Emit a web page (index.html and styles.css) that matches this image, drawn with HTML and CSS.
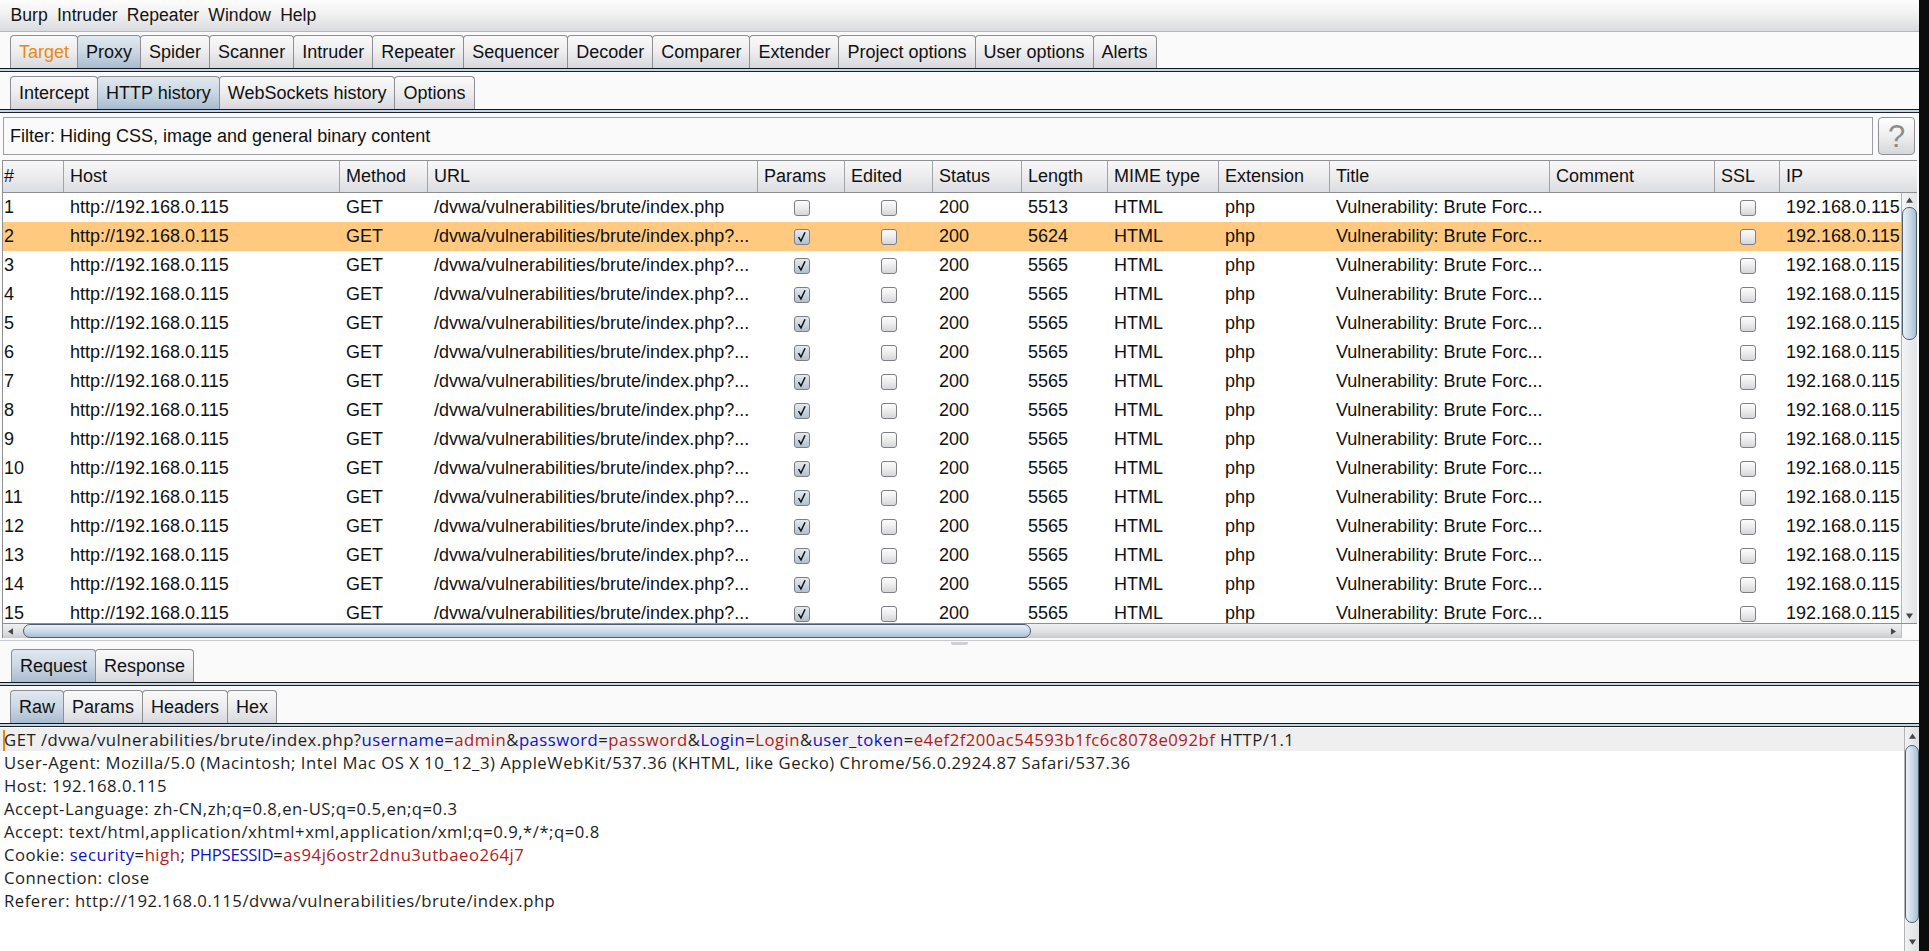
FILE: index.html
```html
<!DOCTYPE html>
<html>
<head>
<meta charset="utf-8">
<title>Burp Suite</title>
<link rel="stylesheet" href="styles.css">
</head>
<body>
<div class="app">
  <div class="menubar">
    <span>Burp</span><span>Intruder</span><span>Repeater</span><span>Window</span><span>Help</span>
  </div>

  <div class="tabstrip main">
    <div class="tab alert">Target</div>
    <div class="tab sel">Proxy</div>
    <div class="tab">Spider</div>
    <div class="tab">Scanner</div>
    <div class="tab">Intruder</div>
    <div class="tab">Repeater</div>
    <div class="tab">Sequencer</div>
    <div class="tab">Decoder</div>
    <div class="tab">Comparer</div>
    <div class="tab">Extender</div>
    <div class="tab">Project options</div>
    <div class="tab">User options</div>
    <div class="tab">Alerts</div>
  </div>
  <div class="tabline"></div>

  <div class="tabstrip sub">
    <div class="tab">Intercept</div>
    <div class="tab sel">HTTP history</div>
    <div class="tab">WebSockets history</div>
    <div class="tab">Options</div>
  </div>
  <div class="tabline"></div>

  <div class="filterrow">
    <div class="filter">Filter: Hiding CSS, image and general binary content</div>
    <div class="help">?</div>
  </div>

  <div class="table">
    <div class="thead">
      <div class="th num">#</div>
      <div class="th">Host</div>
      <div class="th">Method</div>
      <div class="th">URL</div>
      <div class="th">Params</div>
      <div class="th">Edited</div>
      <div class="th">Status</div>
      <div class="th">Length</div>
      <div class="th">MIME type</div>
      <div class="th">Extension</div>
      <div class="th">Title</div>
      <div class="th">Comment</div>
      <div class="th">SSL</div>
      <div class="th last">IP</div>
    </div>
    <div class="tbody">
      <div class="rows">
        <div class="row"><div class="td num">1</div><div class="td">http://192.168.0.115</div><div class="td">GET</div><div class="td">/dvwa/vulnerabilities/brute/index.php</div><div class="td cb"><i class="chk"></i></div><div class="td cb"><i class="chk"></i></div><div class="td">200</div><div class="td">5513</div><div class="td">HTML</div><div class="td">php</div><div class="td">Vulnerability: Brute Forc...</div><div class="td"></div><div class="td cb"><i class="chk"></i></div><div class="td">192.168.0.115</div></div>
        <div class="row sel"><div class="td num">2</div><div class="td">http://192.168.0.115</div><div class="td">GET</div><div class="td">/dvwa/vulnerabilities/brute/index.php?...</div><div class="td cb"><i class="chk on"><svg viewBox="0 0 15 15"><path d="M3.8 7.6 L6.4 11.8 L10.8 2.4"/></svg></i></div><div class="td cb"><i class="chk"></i></div><div class="td">200</div><div class="td">5624</div><div class="td">HTML</div><div class="td">php</div><div class="td">Vulnerability: Brute Forc...</div><div class="td"></div><div class="td cb"><i class="chk"></i></div><div class="td">192.168.0.115</div></div>
        <div class="row"><div class="td num">3</div><div class="td">http://192.168.0.115</div><div class="td">GET</div><div class="td">/dvwa/vulnerabilities/brute/index.php?...</div><div class="td cb"><i class="chk on"><svg viewBox="0 0 15 15"><path d="M3.8 7.6 L6.4 11.8 L10.8 2.4"/></svg></i></div><div class="td cb"><i class="chk"></i></div><div class="td">200</div><div class="td">5565</div><div class="td">HTML</div><div class="td">php</div><div class="td">Vulnerability: Brute Forc...</div><div class="td"></div><div class="td cb"><i class="chk"></i></div><div class="td">192.168.0.115</div></div>
        <div class="row"><div class="td num">4</div><div class="td">http://192.168.0.115</div><div class="td">GET</div><div class="td">/dvwa/vulnerabilities/brute/index.php?...</div><div class="td cb"><i class="chk on"><svg viewBox="0 0 15 15"><path d="M3.8 7.6 L6.4 11.8 L10.8 2.4"/></svg></i></div><div class="td cb"><i class="chk"></i></div><div class="td">200</div><div class="td">5565</div><div class="td">HTML</div><div class="td">php</div><div class="td">Vulnerability: Brute Forc...</div><div class="td"></div><div class="td cb"><i class="chk"></i></div><div class="td">192.168.0.115</div></div>
        <div class="row"><div class="td num">5</div><div class="td">http://192.168.0.115</div><div class="td">GET</div><div class="td">/dvwa/vulnerabilities/brute/index.php?...</div><div class="td cb"><i class="chk on"><svg viewBox="0 0 15 15"><path d="M3.8 7.6 L6.4 11.8 L10.8 2.4"/></svg></i></div><div class="td cb"><i class="chk"></i></div><div class="td">200</div><div class="td">5565</div><div class="td">HTML</div><div class="td">php</div><div class="td">Vulnerability: Brute Forc...</div><div class="td"></div><div class="td cb"><i class="chk"></i></div><div class="td">192.168.0.115</div></div>
        <div class="row"><div class="td num">6</div><div class="td">http://192.168.0.115</div><div class="td">GET</div><div class="td">/dvwa/vulnerabilities/brute/index.php?...</div><div class="td cb"><i class="chk on"><svg viewBox="0 0 15 15"><path d="M3.8 7.6 L6.4 11.8 L10.8 2.4"/></svg></i></div><div class="td cb"><i class="chk"></i></div><div class="td">200</div><div class="td">5565</div><div class="td">HTML</div><div class="td">php</div><div class="td">Vulnerability: Brute Forc...</div><div class="td"></div><div class="td cb"><i class="chk"></i></div><div class="td">192.168.0.115</div></div>
        <div class="row"><div class="td num">7</div><div class="td">http://192.168.0.115</div><div class="td">GET</div><div class="td">/dvwa/vulnerabilities/brute/index.php?...</div><div class="td cb"><i class="chk on"><svg viewBox="0 0 15 15"><path d="M3.8 7.6 L6.4 11.8 L10.8 2.4"/></svg></i></div><div class="td cb"><i class="chk"></i></div><div class="td">200</div><div class="td">5565</div><div class="td">HTML</div><div class="td">php</div><div class="td">Vulnerability: Brute Forc...</div><div class="td"></div><div class="td cb"><i class="chk"></i></div><div class="td">192.168.0.115</div></div>
        <div class="row"><div class="td num">8</div><div class="td">http://192.168.0.115</div><div class="td">GET</div><div class="td">/dvwa/vulnerabilities/brute/index.php?...</div><div class="td cb"><i class="chk on"><svg viewBox="0 0 15 15"><path d="M3.8 7.6 L6.4 11.8 L10.8 2.4"/></svg></i></div><div class="td cb"><i class="chk"></i></div><div class="td">200</div><div class="td">5565</div><div class="td">HTML</div><div class="td">php</div><div class="td">Vulnerability: Brute Forc...</div><div class="td"></div><div class="td cb"><i class="chk"></i></div><div class="td">192.168.0.115</div></div>
        <div class="row"><div class="td num">9</div><div class="td">http://192.168.0.115</div><div class="td">GET</div><div class="td">/dvwa/vulnerabilities/brute/index.php?...</div><div class="td cb"><i class="chk on"><svg viewBox="0 0 15 15"><path d="M3.8 7.6 L6.4 11.8 L10.8 2.4"/></svg></i></div><div class="td cb"><i class="chk"></i></div><div class="td">200</div><div class="td">5565</div><div class="td">HTML</div><div class="td">php</div><div class="td">Vulnerability: Brute Forc...</div><div class="td"></div><div class="td cb"><i class="chk"></i></div><div class="td">192.168.0.115</div></div>
        <div class="row"><div class="td num">10</div><div class="td">http://192.168.0.115</div><div class="td">GET</div><div class="td">/dvwa/vulnerabilities/brute/index.php?...</div><div class="td cb"><i class="chk on"><svg viewBox="0 0 15 15"><path d="M3.8 7.6 L6.4 11.8 L10.8 2.4"/></svg></i></div><div class="td cb"><i class="chk"></i></div><div class="td">200</div><div class="td">5565</div><div class="td">HTML</div><div class="td">php</div><div class="td">Vulnerability: Brute Forc...</div><div class="td"></div><div class="td cb"><i class="chk"></i></div><div class="td">192.168.0.115</div></div>
        <div class="row"><div class="td num">11</div><div class="td">http://192.168.0.115</div><div class="td">GET</div><div class="td">/dvwa/vulnerabilities/brute/index.php?...</div><div class="td cb"><i class="chk on"><svg viewBox="0 0 15 15"><path d="M3.8 7.6 L6.4 11.8 L10.8 2.4"/></svg></i></div><div class="td cb"><i class="chk"></i></div><div class="td">200</div><div class="td">5565</div><div class="td">HTML</div><div class="td">php</div><div class="td">Vulnerability: Brute Forc...</div><div class="td"></div><div class="td cb"><i class="chk"></i></div><div class="td">192.168.0.115</div></div>
        <div class="row"><div class="td num">12</div><div class="td">http://192.168.0.115</div><div class="td">GET</div><div class="td">/dvwa/vulnerabilities/brute/index.php?...</div><div class="td cb"><i class="chk on"><svg viewBox="0 0 15 15"><path d="M3.8 7.6 L6.4 11.8 L10.8 2.4"/></svg></i></div><div class="td cb"><i class="chk"></i></div><div class="td">200</div><div class="td">5565</div><div class="td">HTML</div><div class="td">php</div><div class="td">Vulnerability: Brute Forc...</div><div class="td"></div><div class="td cb"><i class="chk"></i></div><div class="td">192.168.0.115</div></div>
        <div class="row"><div class="td num">13</div><div class="td">http://192.168.0.115</div><div class="td">GET</div><div class="td">/dvwa/vulnerabilities/brute/index.php?...</div><div class="td cb"><i class="chk on"><svg viewBox="0 0 15 15"><path d="M3.8 7.6 L6.4 11.8 L10.8 2.4"/></svg></i></div><div class="td cb"><i class="chk"></i></div><div class="td">200</div><div class="td">5565</div><div class="td">HTML</div><div class="td">php</div><div class="td">Vulnerability: Brute Forc...</div><div class="td"></div><div class="td cb"><i class="chk"></i></div><div class="td">192.168.0.115</div></div>
        <div class="row"><div class="td num">14</div><div class="td">http://192.168.0.115</div><div class="td">GET</div><div class="td">/dvwa/vulnerabilities/brute/index.php?...</div><div class="td cb"><i class="chk on"><svg viewBox="0 0 15 15"><path d="M3.8 7.6 L6.4 11.8 L10.8 2.4"/></svg></i></div><div class="td cb"><i class="chk"></i></div><div class="td">200</div><div class="td">5565</div><div class="td">HTML</div><div class="td">php</div><div class="td">Vulnerability: Brute Forc...</div><div class="td"></div><div class="td cb"><i class="chk"></i></div><div class="td">192.168.0.115</div></div>
        <div class="row"><div class="td num">15</div><div class="td">http://192.168.0.115</div><div class="td">GET</div><div class="td">/dvwa/vulnerabilities/brute/index.php?...</div><div class="td cb"><i class="chk on"><svg viewBox="0 0 15 15"><path d="M3.8 7.6 L6.4 11.8 L10.8 2.4"/></svg></i></div><div class="td cb"><i class="chk"></i></div><div class="td">200</div><div class="td">5565</div><div class="td">HTML</div><div class="td">php</div><div class="td">Vulnerability: Brute Forc...</div><div class="td"></div><div class="td cb"><i class="chk"></i></div><div class="td">192.168.0.115</div></div>
      </div>
      <div class="vscroll">
        <div class="varrow"><svg viewBox="0 0 8 6"><path d="M4 0 L8 6 L0 6Z"/></svg></div>
        <div class="vthumb"></div>
        <div class="vtrack"></div>
        <div class="varrow"><svg viewBox="0 0 8 6"><path d="M0 0 L8 0 L4 6Z"/></svg></div>
      </div>
    </div>
    <div class="hscroll">
      <div class="harrow"><svg viewBox="0 0 6 8"><path d="M6 0 L6 8 L0 4Z"/></svg></div>
      <div class="hthumb"></div>
      <div class="htrack"></div>
      <div class="harrow"><svg viewBox="0 0 6 8"><path d="M0 0 L6 4 L0 8Z"/></svg></div>
      <div class="corner"></div>
    </div>
  </div>

  <div class="divider"><div class="grip"></div></div>

  <div class="tabstrip req">
    <div class="tab sel">Request</div>
    <div class="tab">Response</div>
  </div>
  <div class="tabline"></div>

  <div class="tabstrip sub">
    <div class="tab sel">Raw</div>
    <div class="tab">Params</div>
    <div class="tab">Headers</div>
    <div class="tab">Hex</div>
  </div>
  <div class="tabline"></div>

  <div class="editor">
    <div class="text">
      <div class="line cur"><span class="caret"></span>GET /dvwa/vulnerabilities/brute/index.php?<span class="k">username</span>=<span class="v">admin</span>&amp;<span class="k">password</span>=<span class="v">password</span>&amp;<span class="k">Login</span>=<span class="v">Login</span>&amp;<span class="k">user_token</span>=<span class="v">e4ef2f200ac54593b1fc6c8078e092bf</span> HTTP/1.1</div>
      <div class="line">User-Agent: Mozilla/5.0 (Macintosh; Intel Mac OS X 10_12_3) AppleWebKit/537.36 (KHTML, like Gecko) Chrome/56.0.2924.87 Safari/537.36</div>
      <div class="line">Host: 192.168.0.115</div>
      <div class="line">Accept-Language: zh-CN,zh;q=0.8,en-US;q=0.5,en;q=0.3</div>
      <div class="line">Accept: text/html,application/xhtml+xml,application/xml;q=0.9,*/*;q=0.8</div>
      <div class="line">Cookie: <span class="k">security</span>=<span class="v">high</span>; <span class="k caps">PHPSESSID</span>=<span class="v">as94j6ostr2dnu3utbaeo264j7</span></div>
      <div class="line">Connection: close</div>
      <div class="line">Referer: http://192.168.0.115/dvwa/vulnerabilities/brute/index.php</div>
    </div>
    <div class="vscroll2">
      <div class="varrow2"><svg viewBox="0 0 8 6"><path d="M4 0 L8 6 L0 6Z"/></svg></div>
      <div class="vthumb2"></div>
      <div class="vtrack2"></div>
      <div class="varrow2"><svg viewBox="0 0 8 6"><path d="M0 0 L8 0 L4 6Z"/></svg></div>
    </div>
  </div>
</div>
</body>
</html>
```

FILE: styles.css
```css
* { box-sizing: border-box; margin: 0; padding: 0; }
html, body { height: 100%; }
body {
  background: #0c0c0c;
  font-family: "Liberation Sans", Arial, sans-serif;
  font-size: 18px;
  color: #111;
  overflow: hidden;
}
.app {
  width: 1919px;
  height: 951px;
  background: #fafafa;
  display: flex;
  flex-direction: column;
  overflow: hidden;
}

/* menu bar */
.menubar {
  height: 32px;
  flex: none;
  display: flex;
  align-items: center;
  padding: 0 0 1px 6px;
  background: linear-gradient(#fdfdfd, #f1f1f2 45%, #dadbdf);
  border-bottom: 1px solid #b6b7bb;
  color: #151515;
  font-size: 17.6px;
}
.menubar span { padding: 0 4.6px; }

/* tabs */
.tabstrip {
  display: flex;
  flex: none;
  height: 33px;
  padding-left: 10px;
  margin-top: 4px;
}
.tabstrip.main { margin-top: 3px; }
.tabstrip.req { margin-top: 0; padding-left: 11px; }
.tab {
  display: flex;
  align-items: center;
  padding: 0 8px;
  border: 1px solid #8d8e93;
  border-bottom: none;
  border-radius: 4px 4px 0 0;
  background: linear-gradient(#f9f9f9, #ededef 50%, #d7d8dd);
  margin-left: -1px;
  white-space: nowrap;
  color: #111;
}
.tab:first-child { margin-left: 0; }
.tab.sel { background: linear-gradient(#e1e8ef, #cad7e3 50%, #a8bccf); }
.tab.alert { color: #e98a10; }
.tabline {
  flex: none;
  height: 4px;
  border-top: 1px solid #16171b;
  border-bottom: 1px solid #1d2128;
  background: #c3d5e7;
}

/* filter */
.filterrow {
  flex: none;
  display: flex;
  height: 38px;
  margin-top: 4px;
  padding-left: 3px;
  gap: 5px;
}
.filter {
  width: 1870px;
  border: 1px solid #9d9ea2;
  background: #fafafa;
  display: flex;
  align-items: center;
  padding-left: 6px;
}
.help {
  width: 37px;
  border: 1px solid #8f9094;
  border-radius: 4px;
  background: linear-gradient(#fefefe, #eeeeee 50%, #d6d7da);
  display: flex;
  align-items: center;
  justify-content: center;
  font-size: 31px;
  color: #8c8c8c;
  line-height: 1;
}

/* table */
.table {
  flex: none;
  margin-top: 5px;
  margin-left: 2px;
  width: 1915px;
  height: 478px;
  border-left: 1px solid #8e8f93;
  display: flex;
  flex-direction: column;
}
.thead, .row {
  display: grid;
  grid-template-columns: 61px 276px 88px 330px 87px 88px 89px 86px 111px 111px 220px 165px 65px 137px;
}
.thead {
  height: 33px;
  flex: none;
  border-top: 1px solid #8e8f93;
  border-bottom: 1px solid #8e8f93;
  background: linear-gradient(#f8f8f9, #ececee 50%, #dcdde1);
}
.th {
  display: flex;
  align-items: center;
  padding-left: 6px;
  border-right: 1px solid #a2a3a7;
  white-space: nowrap;
  overflow: hidden;
}
.th.num, .td.num { padding-left: 1px; }
.th.last { border-right: none; }
.tbody {
  height: 430px;
  flex: none;
  display: flex;
  background: #fff;
}
.rows {
  flex: 1;
  overflow: hidden;
  background: #fff;
}
.row {
  height: 29px;
  align-items: center;
  width: 1914px;
}
.row.sel { background: #ffca7f; }
.td {
  padding-left: 6px;
  white-space: nowrap;
  overflow: hidden;
}
.td.cb {
  display: flex;
  justify-content: center;
  padding-left: 0;
}
.chk {
  display: block;
  width: 16px;
  height: 16px;
  border: 1px solid #7e7f83;
  border-radius: 3px;
  background: linear-gradient(#fdfdfd, #ececec 50%, #d5d6d9);
}
.chk.on { background: linear-gradient(#e3e9ef, #cbd5df 50%, #b2c1cf); }
.chk svg { display: block; width: 14px; height: 14px; }
.chk svg path { fill: none; stroke: #111; stroke-width: 1.6; }

/* table vertical scrollbar */
.vscroll {
  width: 16px;
  flex: none;
  display: flex;
  flex-direction: column;
  background: linear-gradient(to right, #f4f4f5, #e2e3e6);
  border-left: 1px solid #b3b4b8;
}
.varrow {
  height: 14px;
  flex: none;
  display: flex;
  align-items: center;
  justify-content: center;
}
.varrow svg, .varrow2 svg { width: 7px; height: 6px; display: block; }
.varrow svg path, .varrow2 svg path, .harrow svg path { fill: #454649; }
.vthumb {
  height: 133px;
  flex: none;
  border: 1px solid #4f5e6c;
  border-radius: 7px;
  background: linear-gradient(to right, #eaf1f7, #c8d8e7 55%, #a8bfd3);
}
.vtrack { flex: 1; }

/* horizontal scrollbar */
.hscroll {
  height: 15px;
  flex: none;
  display: flex;
  border-top: 1px solid #8e8f93;
  background: linear-gradient(#f0f0f1, #dedfe2 60%, #c9cacd);
}
.harrow {
  width: 15px;
  flex: none;
  display: flex;
  align-items: center;
  justify-content: center;
}
.harrow svg { width: 5px; height: 7px; display: block; }
.hthumb {
  width: 1008px;
  flex: none;
  margin-left: 5px;
  border: 1px solid #4f5e6c;
  border-radius: 7px;
  background: linear-gradient(#eaf1f7, #c9d9e7 55%, #a9bfd3);
}
.htrack { flex: 1; }
.corner {
  width: 16px;
  flex: none;
  background: #fbfbfb;
  border-left: 1px solid #c0c1c4;
}

/* split divider */
.divider {
  flex: none;
  height: 9px;
  margin-top: 2px;
  border-top: 1px solid #c7c8cb;
  display: flex;
  justify-content: center;
}
.grip {
  width: 17px;
  height: 3px;
  margin-top: 1px;
  background: #cfd0d4;
  border-radius: 0 0 2px 2px;
}

/* request editor */
.editor {
  flex: 1;
  display: flex;
  background: #fff;
  min-height: 0;
}
.text {
  flex: 1;
  overflow: hidden;
  font-family: "Open Sans", "Noto Sans", sans-serif;
  font-size: 16.7px;
  letter-spacing: 0.5px;
  color: #1e1e1e;
  padding-top: 1px;
}
.line {
  height: 23px;
  line-height: 23px;
  white-space: pre;
  padding-left: 4px;
}
.line.cur {
  background: #efefef;
  padding-left: 3px;
}
.caret {
  display: inline-block;
  width: 2px;
  height: 21px;
  background: #e68a0c;
  vertical-align: -5px;
  margin-right: -1px;
}
.k { color: #1212c4; }
.k.caps { letter-spacing: -0.3px; }
.v { color: #b11b1b; }

.vscroll2 {
  width: 15px;
  flex: none;
  display: flex;
  flex-direction: column;
  background: linear-gradient(to right, #f2f2f3, #dedfe2);
  border-left: 1px solid #b3b4b8;
}
.varrow2 {
  height: 18px;
  flex: none;
  display: flex;
  align-items: center;
  justify-content: center;
}
.vthumb2 {
  height: 178px;
  flex: none;
  border: 1px solid #4f5e6c;
  border-radius: 7px;
  background: linear-gradient(to right, #eaf1f7, #c8d8e7 55%, #a8bfd3);
}
.vtrack2 { flex: 1; }
```
